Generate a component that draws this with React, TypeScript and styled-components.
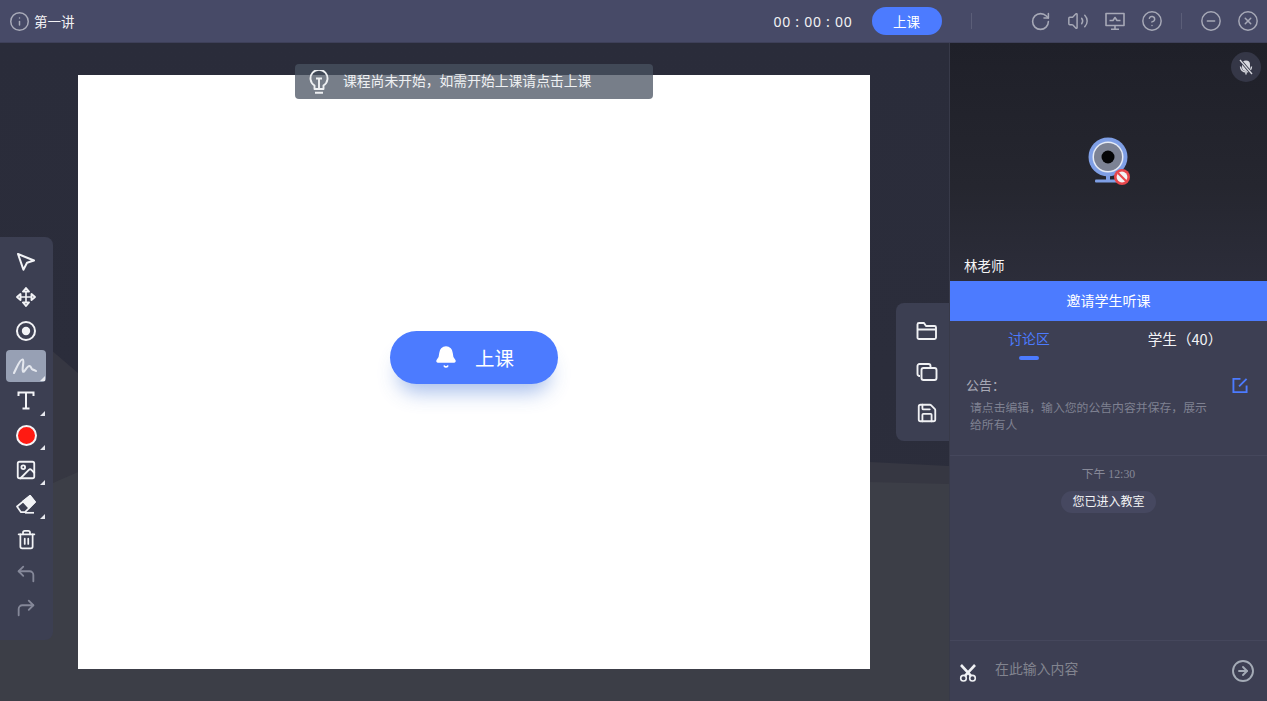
import React from 'react';
import styled, { createGlobalStyle } from 'styled-components';
import {
  Bell,
  CircleArrowRight,
  CircleHelp,
  CircleMinus,
  CircleX,
  CornerUpLeft,
  CornerUpRight,
  Image as ImageIcon,
  Info,
  RotateCw,
  Save,
  Trash2,
  Volume2,
} from 'lucide-react';

const GlobalStyle = createGlobalStyle`
  html, body { margin: 0; padding: 0; height: 100%; }
  body {
    font-family: "Liberation Sans", "Noto Sans CJK SC", sans-serif;
    background: #2b2d3b;
    overflow: hidden;
  }
  * { box-sizing: border-box; }
`;

const Page = styled.div`
  width: 1267px;
  height: 701px;
  display: flex;
  flex-direction: column;
  color: #fff;
`;

const TopBar = styled.header`
  height: 43px;
  flex: none;
  display: flex;
  align-items: center;
  padding: 0 8px 0 9px;
  background: #474a67;
  border-bottom: 1px solid #3e4059;
`;

const Title = styled.div`
  display: flex;
  align-items: center;
  gap: 4px;
  font-size: 13.5px;
  color: #f2f2f5;
  svg { color: #a9abb9; }
`;

const TopRight = styled.div`
  margin-left: auto;
  display: flex;
  align-items: center;
`;

const Timer = styled.span`
  font-family: "Noto Sans", sans-serif;
  font-size: 14px;
  letter-spacing: 0.75px;
  margin-right: 19px;
  color: #f2f2f5;
`;

const StartButton = styled.button`
  width: 70px;
  height: 28px;
  border: 0;
  border-radius: 14px;
  padding: 0;
  background: #4c7bff;
  color: #fff;
  font: inherit;
  font-size: 13.5px;
`;

const Divider = styled.span<{ $left: number; $right: number }>`
  width: 1px;
  height: 16px;
  background: #5b5e78;
  margin: 0 ${(p) => p.$right}px 0 ${(p) => p.$left}px;
`;

const TopIcons = styled.div<{ $gap: number }>`
  display: flex;
  align-items: center;
  gap: ${(p) => p.$gap}px;
  color: #a7a9b7;
`;

const Main = styled.main`
  flex: 1;
  display: flex;
  min-height: 0;
`;

const Stage = styled.section`
  position: relative;
  width: 949px;
  flex: none;
  padding: 32px 79px 32px 78px;
  background: linear-gradient(180deg, #2a2c3a 0%, #2c2e3c 100%);
  overflow: hidden;
`;

const Hills = styled.svg`
  position: absolute;
  left: 0;
  top: 0;
  width: 100%;
  height: 100%;
`;

const Board = styled.div`
  position: relative;
  width: 792px;
  height: 594px;
  display: flex;
  align-items: center;
  justify-content: center;
  padding-bottom: 30px;
  background: #fff;
`;

const Toast = styled.div`
  position: absolute;
  left: 295px;
  top: 21px;
  width: 358px;
  height: 35px;
  display: flex;
  align-items: center;
  gap: 13px;
  padding: 0 0 0 13px;
  border-radius: 4px;
  background: rgba(73, 83, 97, 0.75);
  color: #eef0f2;
  font-size: 13.8px;
`;

const ToastText = styled.span`
  margin-bottom: 3px;
`;

const BigStart = styled.button`
  width: 168px;
  height: 53px;
  display: flex;
  align-items: center;
  justify-content: center;
  gap: 17px;
  border: 0;
  border-radius: 27px;
  background: #4c7bff;
  color: #fff;
  font: inherit;
  font-size: 19.5px;
  box-shadow: 0 16px 20px -8px rgba(60, 110, 210, 0.45);
`;

const ToolRail = styled.nav`
  position: absolute;
  left: 0;
  top: 194px;
  width: 53px;
  height: 403px;
  padding: 8px 1px 0 0;
  display: flex;
  flex-direction: column;
  align-items: center;
  background: #3c3f52;
  border-radius: 0 8px 8px 0;
`;

const Tool = styled.div<{ $active?: boolean; $dim?: boolean; $corner?: boolean }>`
  position: relative;
  width: 40px;
  height: 32px;
  margin: 1.3px 0;
  flex: none;
  display: flex;
  align-items: center;
  justify-content: center;
  border-radius: 4px;
  background: ${(p) => (p.$active ? '#97a0b4' : 'transparent')};
  color: ${(p) => (p.$dim ? '#858899' : '#f2f3f6')};
  ${(p) =>
    p.$corner &&
    `&::after {
      content: '';
      position: absolute;
      right: 1px;
      bottom: 1px;
      border-left: 5px solid transparent;
      border-bottom: 5px solid #e6e8ee;
    }`}
`;

const ColorDot = styled.span`
  width: 21px;
  height: 21px;
  border-radius: 50%;
  background: #ff1a12;
  border: 2px solid #f4f4f6;
`;

const SideTools = styled.div`
  position: absolute;
  right: 0;
  top: 260px;
  width: 53px;
  height: 138px;
  display: flex;
  flex-direction: column;
  align-items: center;
  justify-content: center;
  gap: 20.5px;
  padding-left: 9px;
  border-radius: 8px 0 0 8px;
  background: #3c3f52;
  color: #f0f1f4;
`;

const Panel = styled.aside`
  flex: 1;
  min-width: 0;
  display: flex;
  flex-direction: column;
  background: #3d3f53;
  border-left: 1px solid #383a49;
`;

const Video = styled.div`
  position: relative;
  height: 238px;
  flex: none;
  display: flex;
  align-items: flex-start;
  justify-content: center;
  padding: 94px 0 0 2px;
  background: linear-gradient(180deg, #1f2029 0%, #25262f 60%, #2c2d3a 100%);
`;

const MuteBadge = styled.span`
  position: absolute;
  right: 6px;
  top: 9px;
  width: 30px;
  height: 30px;
  display: flex;
  align-items: center;
  justify-content: center;
  border-radius: 50%;
  background: #353747;
`;

const TeacherName = styled.span`
  position: absolute;
  left: 14px;
  bottom: 6px;
  font-size: 13.5px;
  color: #f4f4f6;
`;

const InviteBar = styled.div`
  height: 40px;
  flex: none;
  display: flex;
  align-items: center;
  justify-content: center;
  padding-bottom: 2px;
  background: #4c7bff;
  font-size: 14px;
`;

const Tabs = styled.div`
  height: 43px;
  flex: none;
  display: flex;
  justify-content: space-between;
  padding: 0 12px 0 44px;
`;

const Tab = styled.div<{ $active?: boolean; $width: number }>`
  position: relative;
  width: ${(p) => p.$width}px;
  display: flex;
  justify-content: center;
  padding-top: ${(p) => (p.$active ? 7 : 8)}px;
  font-family: "Noto Sans CJK SC", sans-serif;
  font-size: ${(p) => (p.$active ? 13.8 : 14.6)}px;
  line-height: 20px;
  color: ${(p) => (p.$active ? '#4c7bff' : '#f2f3f6')};
  ${(p) =>
    p.$active &&
    `&::after {
      content: '';
      position: absolute;
      left: 50%;
      bottom: 4px;
      width: 20px;
      height: 4px;
      margin-left: -10px;
      border-radius: 2px;
      background: #4c7bff;
    }`}
`;

const Notice = styled.div`
  position: relative;
  height: 92px;
  flex: none;
  padding: 13px 58px 0 16px;
  border-bottom: 1px solid #45475c;
`;

const NoticeTitle = styled.div`
  font-size: 13px;
  color: #a8a9b6;
  line-height: 18px;
`;

const NoticeText = styled.p`
  margin: 5px 0 0 4px;
  font-size: 11.85px;
  line-height: 17px;
  color: #7f8191;
`;

const EditBadge = styled.span`
  position: absolute;
  right: 19px;
  top: 13px;
  display: flex;
  color: #4c7bff;
`;

const Messages = styled.div`
  flex: 1;
  display: flex;
  flex-direction: column;
  align-items: center;
  padding-top: 10px;
`;

const TimeLabel = styled.div`
  font-family: "Liberation Serif", "Noto Sans CJK SC", serif;
  font-size: 11.8px;
  line-height: 16px;
  color: #868897;
`;

const SystemMsg = styled.div`
  margin-top: 9px;
  height: 22px;
  padding: 0 11.5px 3px;
  display: flex;
  align-items: center;
  border-radius: 11px;
  background: #464860;
  font-size: 12px;
  color: #f4f4f6;
`;

const InputRow = styled.div`
  height: 61px;
  flex: none;
  display: flex;
  align-items: center;
  padding: 0 12px 0 9px;
  border-top: 1px solid #45475c;
  color: #f0f1f4;
`;

const Placeholder = styled.span`
  margin: 0 0 6px 18px;
  font-size: 13.9px;
  color: #82848f;
`;

const SendIcon = styled(CircleArrowRight)`
  margin-left: auto;
  color: #a4abb6;
`;

// toolbar and panel drawings that lucide has no close match for
const ArrowTool = () => (
  <svg width="20" height="20" viewBox="0 0 20 20" fill="none" stroke="currentColor" strokeWidth="2" strokeLinejoin="round">
    <path d="M2 2l16 6.5-7 2.2-3.6 7z" />
  </svg>
);

const MoveTool = () => (
  <svg width="20" height="20" viewBox="0 0 20 20" fill="none" stroke="currentColor" strokeWidth="1.9" strokeLinejoin="round">
    <path d="M10 1L7 4.5h6zM10 19l-3-3.5h6zM1 10l3.5-3v6zM19 10l-3.5-3v6z" />
    <path d="M10 5v10M5 10h10" strokeWidth="1.6" />
  </svg>
);

const TargetTool = () => (
  <svg width="22" height="22" viewBox="0 0 22 22">
    <circle cx="11" cy="11" r="9" fill="none" stroke="currentColor" strokeWidth="2" />
    <circle cx="11" cy="11" r="4.2" fill="currentColor" />
  </svg>
);

const PenScribble = () => (
  <svg width="26" height="22" viewBox="0 0 26 22" fill="none" stroke="#e4e7ee" strokeWidth="2.1" strokeLinecap="round">
    <path d="M1 18C4 12 7 4 9.5 4.5c2.5.5-1 9 .5 12 1 2 4-6 6.5-5.5 2 .5 1.5 3 3 3.5 1 .3 2 .5 3.5 1.5" />
  </svg>
);

const SerifT = () => (
  <svg width="18" height="19" viewBox="0 0 18 19" fill="none" stroke="currentColor" strokeWidth="2">
    <path d="M1.5 5V1.5h15V5M9 1.5V17.5M5.5 17.5h7" />
  </svg>
);

const EraserTool = () => (
  <svg width="20" height="19" viewBox="0 0 20 19" fill="none" stroke="currentColor" strokeWidth="1.7" strokeLinejoin="round">
    <path d="M1 11.5L14 .8 19 7 9 17.2H5z" />
    <path d="M7 6.4L14 .8 19 7l-6 5.8z" fill="currentColor" />
    <path d="M9 17.8h9" />
  </svg>
);

const FolderTool = () => (
  <svg width="22" height="20" viewBox="0 0 22 20" fill="none" stroke="currentColor" strokeWidth="1.9" strokeLinejoin="round">
    <path d="M1.5 3.5A1.5 1.5 0 0 1 3 2h5l2 3h8.5A1.5 1.5 0 0 1 20 6.5v10a1.5 1.5 0 0 1-1.5 1.5H3a1.5 1.5 0 0 1-1.5-1.5zM1.5 8.5H20" />
  </svg>
);

const Layers = () => (
  <svg width="22" height="20" viewBox="0 -1.5 22 20" fill="none" stroke="currentColor" strokeWidth="1.9" strokeLinejoin="round">
    <path d="M4 13.5H3.5a2 2 0 0 1-2-2V3.5a2 2 0 0 1 2-2h9a2 2 0 0 1 2 2V5" />
    <rect x="5.5" y="5.5" width="15" height="12" rx="2" />
  </svg>
);

const MonitorPulse = () => (
  <svg width="20" height="19" viewBox="0 0 20 19" fill="none" stroke="currentColor" strokeWidth="1.6" strokeLinejoin="round">
    <rect x="1" y="1.5" width="18" height="12" />
    <path d="M4.5 8.5h3.5l2-3 2 3h3.5M10 13.5v3.5M6 17.2h8" />
  </svg>
);

const Bulb = () => (
  <svg width="22" height="24" viewBox="0 0 22 24" fill="none" stroke="currentColor" strokeWidth="1.9" strokeLinejoin="round">
    <path d="M6.5 15.5a8.5 8.5 0 1 1 9 0V19h-9z" />
    <path d="M8 8.5h6M11 8.5V19M7 22.7h8" />
  </svg>
);

const MutedMic = () => (
  <svg width="18" height="18" viewBox="0 0 18 18" fill="none">
    <rect x="5" y="2.5" width="8" height="10.5" rx="4" fill="#d8d9df" />
    <path d="M3.5 8.5a5.5 5.5 0 0 0 11 0M9 14v2.5" stroke="#d8d9df" strokeWidth="1.4" />
    <path d="M3 2l12 14" stroke="#353747" strokeWidth="3" />
    <path d="M3 2l12 14" stroke="#d8d9df" strokeWidth="1.3" />
  </svg>
);

const EditSquare = () => (
  <svg width="16" height="17" viewBox="0 0 17 17" fill="none" stroke="currentColor" strokeWidth="2">
    <path d="M9 1.5H1.5v14h14V8.5M7.5 9.5L15.5 1.5" />
  </svg>
);

const ScissorsTool = () => (
  <svg width="18" height="18" viewBox="0 0 18 18" fill="none" stroke="currentColor" strokeWidth="1.6" style={{ marginTop: 4 }}>
    <circle cx="4.5" cy="14.2" r="2.8" />
    <circle cx="13.5" cy="14.2" r="2.8" />
    <path d="M6 11.8L16 1M12 11.8L2 1" strokeWidth="2.6" />
  </svg>
);

const Webcam = () => (
  <svg width="44" height="50" viewBox="0 0 44 50">
    <circle cx="20" cy="20" r="19.5" fill="#7f9fe6" />
    <circle cx="20" cy="20" r="15.5" fill="#e6ebf6" />
    <circle cx="20" cy="20" r="14" fill="#7c8294" />
    <circle cx="20" cy="20" r="6.5" fill="#050507" />
    <rect x="18" y="38" width="4" height="6" fill="#7f9fe6" />
    <rect x="7" y="42.5" width="22" height="3" rx="1" fill="#7f9fe6" />
    <circle cx="34" cy="40" r="8" fill="#e8474c" />
    <circle cx="34" cy="40" r="5.4" fill="#f3f3f5" />
    <path d="M30 36l8 8" stroke="#e8474c" strokeWidth="2.2" />
  </svg>
);

export default function App() {
  return (
    <Page>
      <GlobalStyle />
      <TopBar>
        <Title>
          <Info size={21} strokeWidth={1.7} />
          第一讲
        </Title>
        <TopRight>
          <Timer>00 : 00 : 00</Timer>
          <StartButton>上课</StartButton>
          <Divider $left={29} $right={58} />
          <TopIcons $gap={16}>
            <RotateCw size={21} strokeWidth={1.8} />
            <Volume2 size={22} strokeWidth={1.6} />
            <MonitorPulse />
            <CircleHelp size={22} strokeWidth={1.6} />
          </TopIcons>
          <Divider $left={18} $right={18} />
          <TopIcons $gap={15.5}>
            <CircleMinus size={22} strokeWidth={1.6} />
            <CircleX size={22} strokeWidth={1.6} />
          </TopIcons>
        </TopRight>
      </TopBar>
      <Main>
        <Stage>
          <Hills viewBox="0 0 949 658" preserveAspectRatio="none">
            <path d="M0 300L50 306L78 330V430L870 419L949 423V445H0Z" fill="#363742" />
            <path d="M0 450L53 440L78 429L870 439L949 441V658H0Z" fill="#3c3e47" />
          </Hills>
          <Board>
            <BigStart>
              <Bell size={24} fill="#fff" strokeWidth={1.5} />
              上课
            </BigStart>
          </Board>
          <Toast>
            <Bulb />
            <ToastText>课程尚未开始，如需开始上课请点击上课</ToastText>
          </Toast>
          <ToolRail>
            <Tool><ArrowTool /></Tool>
            <Tool><MoveTool /></Tool>
            <Tool><TargetTool /></Tool>
            <Tool $active $corner><PenScribble /></Tool>
            <Tool $corner><SerifT /></Tool>
            <Tool $corner><ColorDot /></Tool>
            <Tool $corner><ImageIcon size={22} strokeWidth={2} /></Tool>
            <Tool $corner><EraserTool /></Tool>
            <Tool><Trash2 size={21} strokeWidth={2} /></Tool>
            <Tool $dim><CornerUpLeft size={22} strokeWidth={2} /></Tool>
            <Tool $dim><CornerUpRight size={22} strokeWidth={2} /></Tool>
          </ToolRail>
          <SideTools>
            <FolderTool />
            <Layers />
            <Save size={22} strokeWidth={2} />
          </SideTools>
        </Stage>
        <Panel>
          <Video>
            <MuteBadge><MutedMic /></MuteBadge>
            <Webcam />
            <TeacherName>林老师</TeacherName>
          </Video>
          <InviteBar>邀请学生听课</InviteBar>
          <Tabs>
            <Tab $active $width={70}>讨论区</Tab>
            <Tab $width={140}>学生（40）</Tab>
          </Tabs>
          <Notice>
            <NoticeTitle>公告：</NoticeTitle>
            <NoticeText>请点击编辑，输入您的公告内容并保存，展示给所有人</NoticeText>
            <EditBadge><EditSquare /></EditBadge>
          </Notice>
          <Messages>
            <TimeLabel>下午 12:30</TimeLabel>
            <SystemMsg>您已进入教室</SystemMsg>
          </Messages>
          <InputRow>
            <ScissorsTool />
            <Placeholder>在此输入内容</Placeholder>
            <SendIcon size={24} strokeWidth={1.9} />
          </InputRow>
        </Panel>
      </Main>
    </Page>
  );
}
